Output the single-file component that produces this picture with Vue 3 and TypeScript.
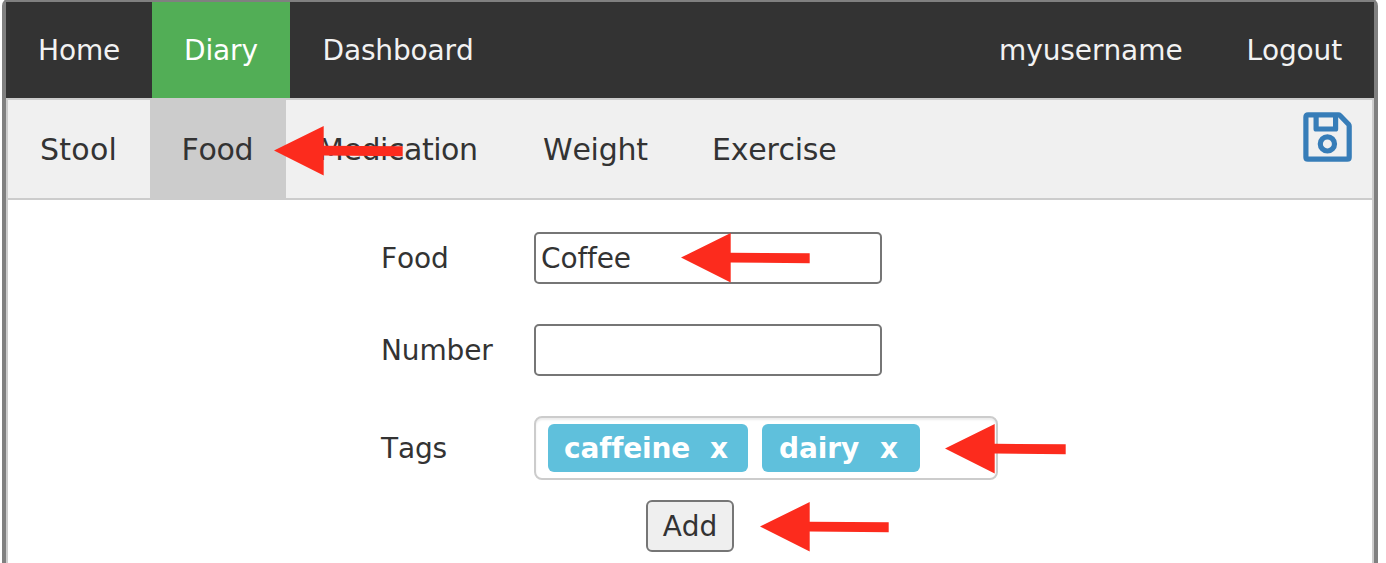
<script setup lang="ts">
import { ref } from 'vue'

interface Tab { label: string; key: string }
interface Pointer { key: string; length: number }

const mainTabs: Tab[] = [
  { label: 'Home', key: 'home' },
  { label: 'Diary', key: 'diary' },
  { label: 'Dashboard', key: 'dashboard' },
]
const accountTabs: Tab[] = [
  { label: 'myusername', key: 'user' },
  { label: 'Logout', key: 'logout' },
]
const diaryTabs: Tab[] = [
  { label: 'Stool', key: 'stool' },
  { label: 'Food', key: 'food' },
  { label: 'Medication', key: 'medication' },
  { label: 'Weight', key: 'weight' },
  { label: 'Exercise', key: 'exercise' },
]
const activeMain = ref('diary')
const activeDiary = ref('food')
const food = ref('Coffee')
const amount = ref('')
const tags = ref<string[]>(['caffeine', 'dairy'])
const pointers: Pointer[] = [
  { key: 'at-tab', length: 128.7 },
  { key: 'at-food', length: 128.7 },
  { key: 'at-tags', length: 120.7 },
  { key: 'at-add', length: 128.7 },
]

function arrow(length: number): string {
  return `0,24.6 49.7,0 49.7,19.8 ${length},20.3 ${length},30.2 49.7,29.6 49.7,49.5`
}

function removeTag(tag: string): void {
  tags.value = tags.value.filter((t) => t !== tag)
}
</script>

<template>
  <div class="page">
    <div class="frame">
      <nav class="topnav">
        <a v-for="t in mainTabs" :key="t.key" :class="['tab', t.key, { active: t.key === activeMain }]" @click="activeMain = t.key">{{ t.label }}</a>
        <span class="spacer"></span>
        <a v-for="t in accountTabs" :key="t.key" :class="['tab', t.key]">{{ t.label }}</a>
      </nav>
      <div class="subnav">
        <a v-for="t in diaryTabs" :key="t.key" :class="['subtab', t.key, { active: t.key === activeDiary }]" @click="activeDiary = t.key">{{ t.label }}</a>
        <span class="spacer"></span>
        <svg class="save" viewBox="0 0 50 50" width="50" height="50">
          <g fill="none" stroke="#377db8" stroke-width="5.2" stroke-linejoin="round">
            <path d="M5 2.8H35.3Q36.3 2.8 37 3.5L45.5 12.2Q46.2 13 46.2 14V45.3Q46.2 47.2 44.3 47.2H4.9Q2.9 47.2 2.9 45.3V4.9Q2.9 2.8 5 2.8Z" />
            <path d="M13.1 2.8V17H32.6V2.8" />
            <circle cx="24.4" cy="31.9" r="7.1" />
          </g>
        </svg>
      </div>
      <main class="content">
        <form class="form" @submit.prevent>
          <label class="row">
            <span class="name">Food</span>
            <input v-model="food" class="field" type="text" />
          </label>
          <label class="row">
            <span class="name">Number</span>
            <input v-model="amount" class="field" type="text" />
          </label>
          <div class="row">
            <span class="name">Tags</span>
            <div class="tagbox">
              <span v-for="tag in tags" :key="tag" :class="['chip', tag]">
                <span>{{ tag }}</span><span class="remove" @click="removeTag(tag)">x</span>
              </span>
            </div>
          </div>
          <button class="add" type="button">Add</button>
        </form>
      </main>
    </div>
    <svg v-for="p in pointers" :key="p.key" :class="['pointer', p.key]" viewBox="0 0 129 50" width="129" height="50">
      <polygon :points="arrow(p.length)" fill="#fc2b1d" />
    </svg>
  </div>
</template>

<style>
body { background: #fff; }
</style>

<style scoped>
* { box-sizing: border-box; }
.page {
  position: relative;
  height: 563px;
  overflow: hidden;
  padding: 0 8px 0 2px;
  font: 28px Verdana, "DejaVu Sans", sans-serif;
  font-kerning: none;
  color: #333;
}
.frame {
  height: 600px;
  margin-top: -2px;
  border: 4px solid #808080;
  border-radius: 8px;
}
.spacer { flex: 1; }
.topnav { display: flex; height: 96px; background: #333; }
.tab {
  padding-left: 32px;
  line-height: 98px;
  height: 96px;
  color: #f2f2f2;
  letter-spacing: -0.15px;
  white-space: nowrap;
}
.tab.active { background: #52ae56; color: #fff; }
.home { width: 146px; }
.diary { width: 138px; }
.dashboard { width: 216px; padding-left: 32.5px; }
.user { width: 247px; letter-spacing: -0.08px; }
.logout { width: 160px; padding-left: 32.5px; }
.subnav {
  display: flex;
  height: 102px;
  border: 2px solid #ccc;
  background: #f0f0f0;
}
.subtab {
  height: 98px;
  padding-left: 32px;
  font-size: 30px;
  line-height: 100px;
  letter-spacing: -0.25px;
  white-space: nowrap;
}
.subtab.active { background: #ccc; }
.stool { width: 142px; letter-spacing: 0.25px; }
.food { width: 136px; padding-left: 31.5px; letter-spacing: -0.3px; }
.medication { width: 225px; letter-spacing: -0.45px; }
.weight { width: 169px; }
.exercise { width: 190px; }
.save { margin: 12px 19px 0 0; }
.content {
  height: 400px;
  padding: 32px 0 0 373px;
  border: solid #ccc;
  border-width: 0 2px;
}
.form { display: flex; flex-direction: column; gap: 40px; width: 617px; }
.row { display: flex; align-items: center; letter-spacing: -0.15px; }
.name { width: 153px; }
.field {
  width: 348px;
  height: 52px;
  padding: 0 5px;
  border: 2px solid #767676;
  border-radius: 5px;
  background: #fff;
  color: #333;
  font: inherit;
  letter-spacing: -0.15px;
  outline: none;
}
.tagbox {
  display: flex;
  gap: 14px;
  width: 464px;
  height: 64px;
  padding: 6px 12px;
  border: 2px solid #ccc;
  border-radius: 8px;
  box-shadow: inset 0 2px 2px rgba(0, 0, 0, 0.075);
}
.chip {
  display: flex;
  justify-content: space-between;
  height: 48px;
  padding: 0 20px 0 16px;
  border-radius: 6px;
  background: #5fc0dc;
  color: #fff;
  font-weight: bold;
  line-height: 50px;
}
.caffeine { width: 200px; }
.dairy { width: 158px; padding: 0 22px 0 17px; letter-spacing: -0.1px; }
.add {
  width: 88px;
  height: 52px;
  margin: -20px 0 0 265px;
  padding: 0;
  border: 2px solid #767676;
  border-radius: 6px;
  background: #efefef;
  color: #333;
  font: inherit;
}
.pointer { position: absolute; }
.at-tab { left: 274.3px; top: 125.5px; }
.at-food { left: 681.3px; top: 232.5px; }
.at-tags { left: 945.3px; top: 423.5px; }
.at-add { left: 760.3px; top: 501.5px; }
</style>
